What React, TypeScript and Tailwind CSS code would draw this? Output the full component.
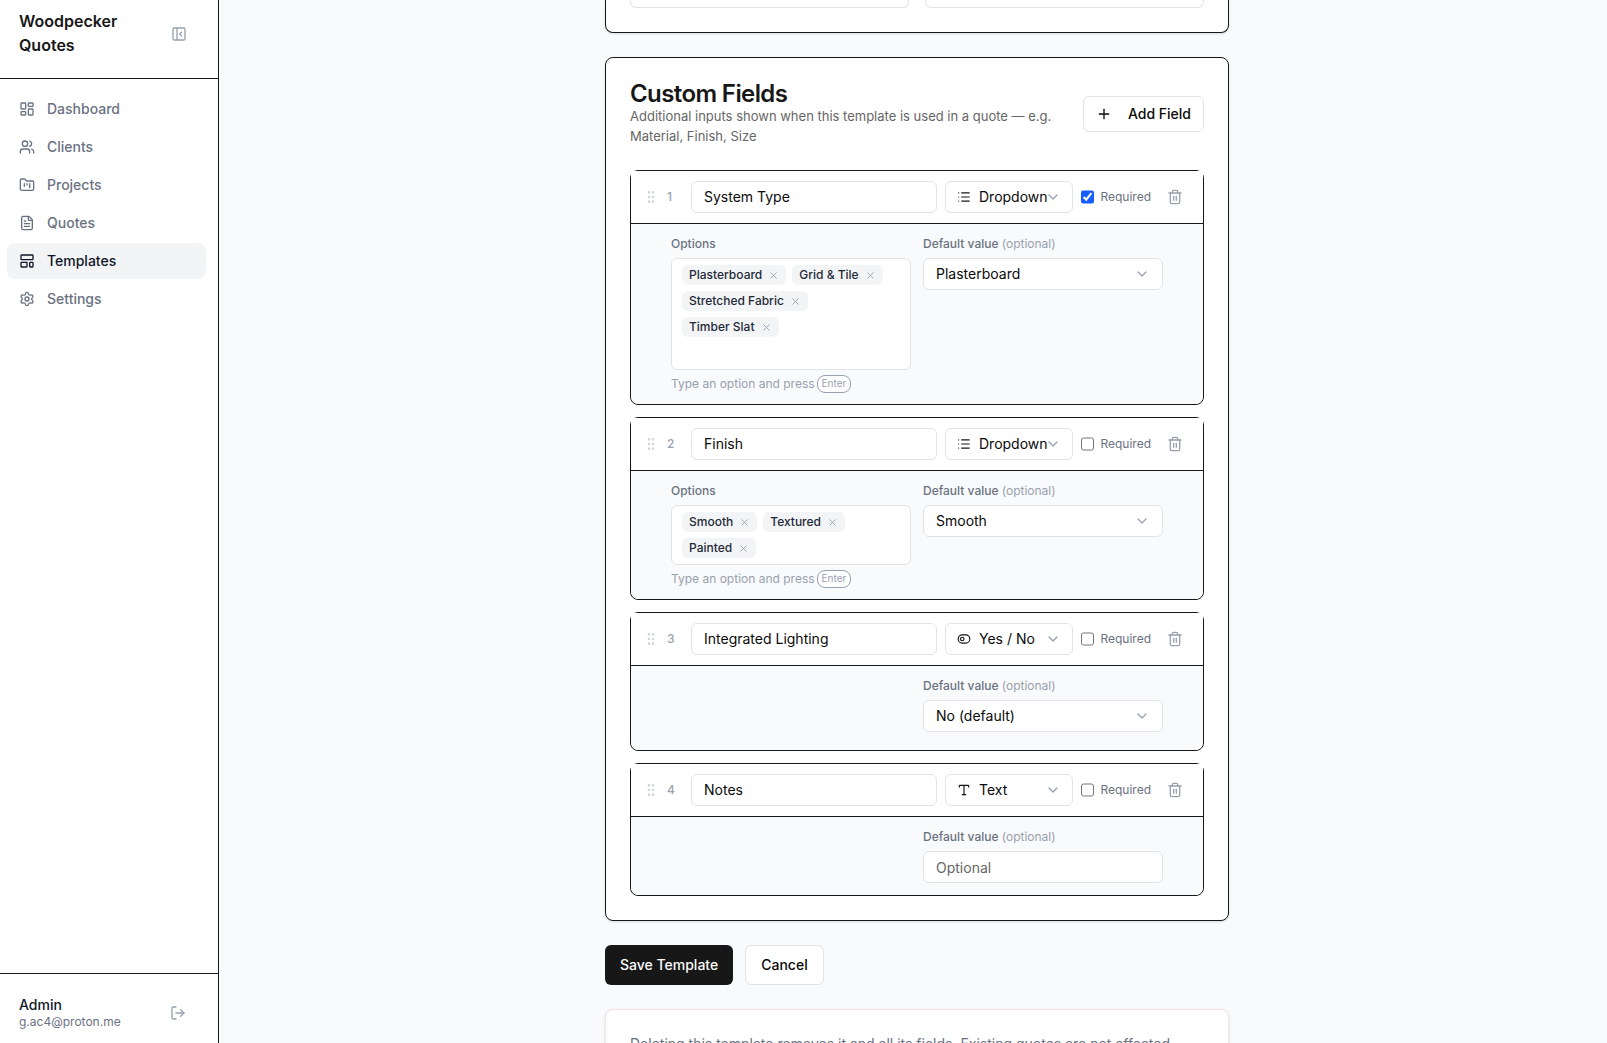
import { useState } from "react";
import {
  ChevronDown,
  FileText,
  FolderKanban,
  GripVertical,
  LayoutDashboard,
  LayoutTemplate,
  List,
  LogOut,
  PanelLeftClose,
  Plus,
  Settings,
  ToggleLeft,
  Trash2,
  Type,
  Users,
  X,
} from "lucide-react";

const navItems = [
  { label: "Dashboard", icon: LayoutDashboard },
  { label: "Clients", icon: Users },
  { label: "Projects", icon: FolderKanban },
  { label: "Quotes", icon: FileText },
  { label: "Templates", icon: LayoutTemplate, active: true },
  { label: "Settings", icon: Settings },
];

const typeIcons = { Dropdown: List, "Yes / No": ToggleLeft, Text: Type };

type FieldType = keyof typeof typeIcons;

interface Field {
  name: string;
  type: FieldType;
  required: boolean;
  options: string[];
  value: string;
}

const initialFields: Field[] = [
  {
    name: "System Type",
    type: "Dropdown",
    required: true,
    options: ["Plasterboard", "Grid & Tile", "Stretched Fabric", "Timber Slat"],
    value: "Plasterboard",
  },
  {
    name: "Finish",
    type: "Dropdown",
    required: false,
    options: ["Smooth", "Textured", "Painted"],
    value: "Smooth",
  },
  { name: "Integrated Lighting", type: "Yes / No", required: false, options: [], value: "No (default)" },
  { name: "Notes", type: "Text", required: false, options: [], value: "" },
];

const inputClass =
  "h-8 w-full min-w-0 rounded-md border border-[#e2e3e6] bg-white px-3 text-sm text-[#0a0a0a] placeholder:text-[#666] outline-none";

const Sidebar = () => (
  <aside className="flex w-[219px] shrink-0 flex-col border-r border-[#171717] bg-white">
    <div className="flex h-[79px] items-start justify-between border-b border-[#171717] pt-[9px] pr-[31px] pl-[19px]">
      <h1 className="w-28 text-base leading-6 font-semibold text-[#171717]">
        Woodpecker Quotes
      </h1>
      <button aria-label="Collapse sidebar" className="mt-[17px] text-gray-400">
        <PanelLeftClose size={16} />
      </button>
    </div>
    <nav className="flex flex-1 flex-col gap-0.5 py-3 pr-3 pl-[7px]">
      {navItems.map(({ label, icon: Icon, active }) => (
        <a
          key={label}
          href="#"
          className={`flex h-9 items-center gap-3 rounded-lg pl-3 text-sm font-medium ${
            active ? "bg-gray-100 text-gray-900" : "text-gray-500"
          }`}
        >
          <Icon size={16} />
          {label}
        </a>
      ))}
    </nav>
    <div className="flex h-[70px] items-center justify-between border-t border-[#171717] pt-2 pr-8 pl-[19px]">
      <div>
        <p className="text-sm leading-[18px] font-medium text-gray-900">Admin</p>
        <p className="text-xs leading-4 text-gray-500">g.ac4@proton.me</p>
      </div>
      <button aria-label="Log out" className="text-gray-400">
        <LogOut size={16} />
      </button>
    </div>
  </aside>
);

const OptionsInput = ({ id, options }: { id: string; options: string[] }) => (
  <div>
    <label htmlFor={id} className="block text-xs leading-4 font-medium text-gray-500">
      Options
    </label>
    <div className="mt-1.5 flex flex-wrap gap-1.5 rounded-md border border-[#e2e3e6] bg-white px-2.5 py-1.5">
      {options.map((option) => (
        <span
          key={option}
          className="flex h-5 items-center gap-1.5 rounded-md bg-gray-100 px-[7px] text-xs font-medium text-gray-800"
        >
          {option}
          <button aria-label={`Remove ${option}`} className="text-gray-400">
            <X size={11} />
          </button>
        </span>
      ))}
      <input id={id} className="h-5 min-w-[120px] flex-1 text-xs outline-none" />
    </div>
    <p className="mt-1.5 flex h-4 items-center gap-0.5 text-xs whitespace-nowrap text-gray-400">
      Type an option and press
      <kbd className="flex h-[18px] items-center rounded-lg border border-gray-400 bg-white px-1 font-[Inter,sans-serif] text-[10px]">
        Enter
      </kbd>
    </p>
  </div>
);

const DefaultValue = ({ id, field }: { id: string; field: Field }) => {
  const choices = field.type === "Dropdown" ? field.options : ["No (default)", "Yes"];
  return (
    <div className="col-start-2">
      <label htmlFor={id} className="block text-xs leading-4 font-medium text-gray-500">
        Default value <span className="font-normal text-gray-400">(optional)</span>
      </label>
      {field.type === "Text" ? (
        <input id={id} placeholder="Optional" className={`mt-1.5 ${inputClass}`} />
      ) : (
        <div className="relative my-1.5">
          <select id={id} defaultValue={field.value} className={`appearance-none ${inputClass}`}>
            {choices.map((choice) => (
              <option key={choice}>{choice}</option>
            ))}
          </select>
          <ChevronDown
            size={16}
            className="pointer-events-none absolute top-2 right-[13px] text-gray-400"
          />
        </div>
      )}
    </div>
  );
};

const FieldCard = ({ initial, index }: { initial: Field; index: number }) => {
  const [field, setField] = useState(initial);
  const TypeIcon = typeIcons[field.type];
  return (
    <div className="rounded-lg border border-[#171717]">
      <div className="flex items-center gap-2 border-b border-[#171717] bg-white px-3 py-2.5">
        <GripVertical size={16} className="shrink-0 text-gray-300" />
        <span className="w-4 shrink-0 text-xs font-medium text-gray-400">{index + 1}</span>
        <input
          aria-label="Field name"
          value={field.name}
          onChange={(e) => setField({ ...field, name: e.target.value })}
          className={`flex-1 pb-0.5 ${inputClass}`}
        />
        <div className="relative w-32 shrink-0">
          <TypeIcon size={14} className="pointer-events-none absolute top-[9px] left-3 text-[#171717]" />
          <select
            aria-label="Field type"
            value={field.type}
            onChange={(e) => setField({ ...field, type: e.target.value as FieldType })}
            className="h-8 w-full appearance-none rounded-md border border-[#e2e3e6] bg-white pl-[33px] text-sm text-[#0a0a0a] outline-none"
          >
            {Object.keys(typeIcons).map((type) => (
              <option key={type}>{type}</option>
            ))}
          </select>
          <ChevronDown
            size={16}
            className="pointer-events-none absolute top-2 right-3 text-gray-400"
          />
        </div>
        <label className="flex w-[70px] shrink-0 items-center gap-1.5 text-xs text-gray-500">
          <input
            type="checkbox"
            checked={field.required}
            onChange={(e) => setField({ ...field, required: e.target.checked })}
            className="size-3.5 accent-blue-600"
          />
          Required
        </label>
        <button
          aria-label="Delete field"
          className="flex size-8 shrink-0 items-center justify-center text-gray-400"
        >
          <Trash2 size={16} />
        </button>
      </div>
      <div className="grid grid-cols-2 gap-3 rounded-b-lg bg-[#f8fafb] px-10 py-3">
        {field.type === "Dropdown" && (
          <OptionsInput id={`options-${index}`} options={field.options} />
        )}
        <DefaultValue id={`default-${index}`} field={field} />
      </div>
    </div>
  );
};

const App = () => {
  return (
    <div className="flex h-screen overflow-hidden bg-[#f9fafb] font-[Inter,sans-serif] antialiased">
      <Sidebar />
      <main className="min-w-0 flex-1 overflow-hidden pl-2">
        <div className="mx-auto flex max-w-2xl flex-col gap-6 px-6">
          <section className="grid grid-cols-2 gap-4 rounded-b-lg border border-t-0 border-[#171717] bg-white px-6 pb-6 shadow-sm">
            <div className="h-2 rounded-b-md border border-t-0 border-[#e2e3e6]" />
            <div className="h-2 rounded-b-md border border-t-0 border-[#e2e3e6]" />
          </section>

          <section className="rounded-lg border border-[#171717] bg-white p-6 shadow-sm">
            <div className="mb-6 flex items-center justify-between gap-4">
              <div>
                <h2 className="text-2xl leading-6 font-semibold tracking-tight text-[#171717]">
                  Custom Fields
                </h2>
                <p className="text-[13px] leading-5 text-[#666]">
                  Additional inputs shown when this template is used in a quote — e.g. Material,
                  Finish, Size
                </p>
              </div>
              <button className="flex h-9 shrink-0 items-center gap-4 rounded-md border border-[#e2e3e6] bg-white px-3 text-sm font-medium text-[#0a0a0a]">
                <Plus size={16} />
                Add Field
              </button>
            </div>
            <div className="flex flex-col gap-3">
              {initialFields.map((field, i) => (
                <FieldCard key={field.name} initial={field} index={i} />
              ))}
            </div>
          </section>

          <div className="flex gap-3">
            <button className="h-10 rounded-md bg-[#171717] px-[15px] text-sm font-medium text-[#fafafa]">
              Save Template
            </button>
            <button className="h-10 rounded-md border border-[#e2e3e6] bg-white px-[15px] text-sm font-medium text-[#0a0a0a]">
              Cancel
            </button>
          </div>

          <section className="rounded-lg border border-[#fbdfe2] bg-white p-6 shadow-sm">
            <p className="text-sm text-gray-500">
              Deleting this template removes it and all its fields. Existing quotes are not affected.
            </p>
          </section>
        </div>
      </main>
    </div>
  );
};

export default App;
